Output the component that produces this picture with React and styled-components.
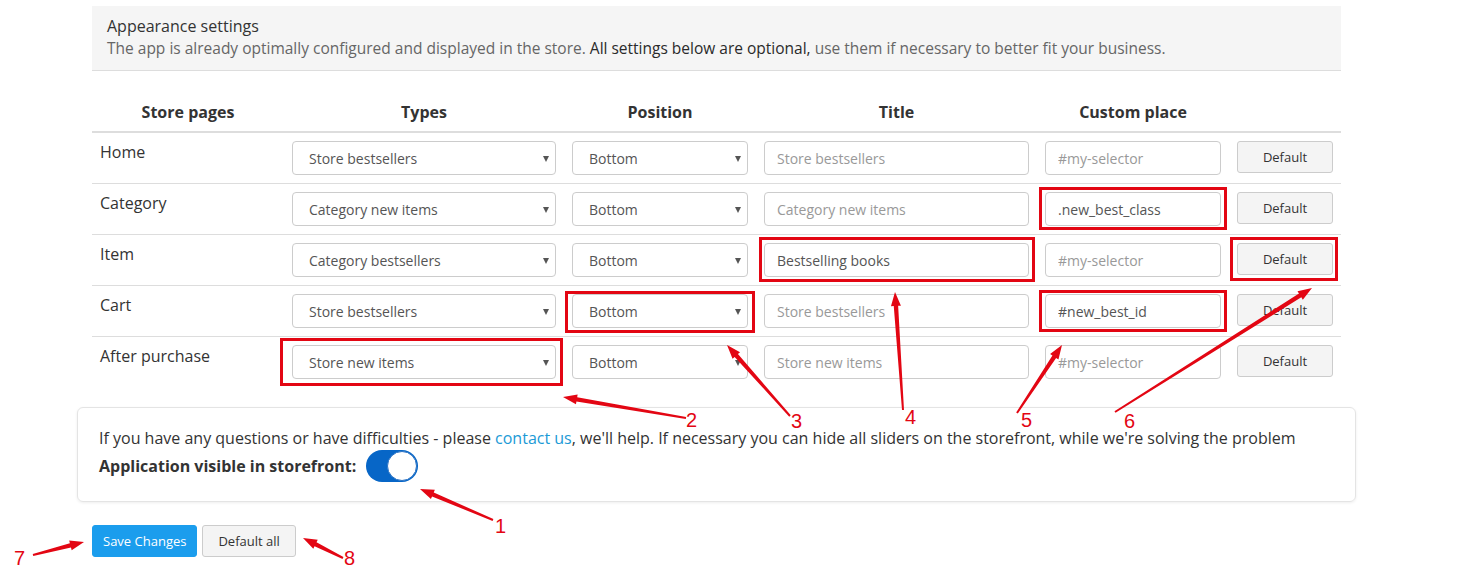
import styled, { createGlobalStyle } from 'styled-components';

const GlobalStyle = createGlobalStyle`
  * { box-sizing: border-box; }
  body {
    margin: 0;
    background: #fff;
    font-family: "Open Sans", "Noto Sans", Arial, sans-serif;
    color: #333;
  }
`;

const TYPES = ['Store bestsellers', 'Store new items', 'Category bestsellers', 'Category new items'];
const POSITIONS = ['Bottom', 'Top'];

const ROWS = [
  { page: 'Home', type: 'Store bestsellers', title: '', titlePh: 'Store bestsellers', place: '' },
  { page: 'Category', type: 'Category new items', title: '', titlePh: 'Category new items', place: '.new_best_class' },
  { page: 'Item', type: 'Category bestsellers', title: 'Bestselling books', titlePh: 'Category bestsellers', place: '' },
  { page: 'Cart', type: 'Store bestsellers', title: '', titlePh: 'Store bestsellers', place: '#new_best_id' },
  { page: 'After purchase', type: 'Store new items', title: '', titlePh: 'Store new items', place: '' },
];

// red marks drawn on top of the screenshot: [x1, y1, x2, y2]
const BOXES = [
  [1039, 187, 1227, 230],
  [759, 237, 1035, 282],
  [1230, 237, 1338, 281],
  [565, 291, 755, 333],
  [1039, 290, 1227, 332],
  [280, 338, 563, 386],
];

// [tailX, tailY, tipX, tipY, label, labelX, labelY]
const ARROWS = [
  [493, 520, 420, 489, '1', 495, 533],
  [686, 418, 563, 397, '2', 686, 427],
  [790, 416, 727, 345, '3', 791, 428],
  [903, 410, 895, 292, '4', 905, 424],
  [1017, 413, 1062, 345, '5', 1021, 427],
  [1115, 412, 1312, 288, '6', 1124, 428],
  [33, 555, 84, 542, '7', 14, 565],
  [343, 558, 303, 538, '8', 344, 565],
];

const arrowPoints = (x1, y1, x2, y2) => {
  const len = Math.hypot(x2 - x1, y2 - y1);
  const dx = (x2 - x1) / len;
  const dy = (y2 - y1) / len;
  const nx = -dy;
  const ny = dx;
  const nkX = x2 - dx * 14;
  const nkY = y2 - dy * 14;
  const p = (x, y, w) => `${x + nx * w},${y + ny * w}`;
  return [
    p(x1, y1, 1),
    p(nkX, nkY, 2.2),
    p(nkX, nkY, 5),
    `${x2},${y2}`,
    p(nkX, nkY, -5),
    p(nkX, nkY, -2.2),
    p(x1, y1, -1),
  ].join(' ');
};

const Annotations = () => (
  <Marks width="1462" height="570" viewBox="0 0 1462 570">
    {BOXES.map(([x1, y1, x2, y2], i) => (
      <rect
        key={'b' + i}
        x={x1 + 1.5}
        y={y1 + 1.5}
        width={x2 - x1 - 3}
        height={y2 - y1 - 3}
        fill="none"
        stroke="#e30613"
        strokeWidth="3"
      />
    ))}
    {ARROWS.map(([x1, y1, x2, y2, label, lx, ly], i) => (
      <g key={'a' + i}>
        <polygon points={arrowPoints(x1, y1, x2, y2)} fill="#e30613" />
        <text x={lx} y={ly} fill="#e30613" fontSize="20" fontFamily="Liberation Sans, Arial, sans-serif">
          {label}
        </text>
      </g>
    ))}
  </Marks>
);

const App = () => {
  return (
    <Page>
      <GlobalStyle />
      <Content>
        <Intro>
          <IntroTitle>Appearance settings</IntroTitle>
          <IntroText>
            The app is already optimally configured and displayed in the store.{' '}
            <Strong>All settings below are optional,</Strong> use them if necessary to better fit your business.
          </IntroText>
        </Intro>

        <Table>
          <colgroup>
            <col style={{ width: 192 }} />
            <col style={{ width: 280 }} />
            <col style={{ width: 192 }} />
            <col style={{ width: 281 }} />
            <col style={{ width: 192 }} />
            <col style={{ width: 112 }} />
          </colgroup>
          <thead>
            <tr>
              <Th>Store pages</Th>
              <Th>Types</Th>
              <Th>Position</Th>
              <Th>Title</Th>
              <Th>Custom place</Th>
              <Th></Th>
            </tr>
          </thead>
          <tbody>
            {ROWS.map((row) => (
              <tr key={row.page}>
                <Td><PageName>{row.page}</PageName></Td>
                <Td>
                  <SelectWrap>
                    <Select defaultValue={row.type}>
                      {TYPES.map((t) => <option key={t}>{t}</option>)}
                    </Select>
                    <Caret />
                  </SelectWrap>
                </Td>
                <Td>
                  <SelectWrap>
                    <Select defaultValue="Bottom">
                      {POSITIONS.map((p) => <option key={p}>{p}</option>)}
                    </Select>
                    <Caret />
                  </SelectWrap>
                </Td>
                <Td>
                  <Input defaultValue={row.title} placeholder={row.titlePh} />
                </Td>
                <Td>
                  <Input defaultValue={row.place} placeholder="#my-selector" />
                </Td>
                <Td>
                  <DefaultButton>Default</DefaultButton>
                </Td>
              </tr>
            ))}
          </tbody>
        </Table>

        <Notice>
          <NoticeLine>
            If you have any questions or have difficulties - please <Link href="#">contact us</Link>, we'll help.
            If necessary you can hide all sliders on the storefront, while we're solving the problem
          </NoticeLine>
          <VisibleRow>
            <VisibleLabel>Application visible in storefront:</VisibleLabel>
            <Toggle $on>
              <Knob />
            </Toggle>
          </VisibleRow>
        </Notice>

        <Actions>
          <Button $primary>Save Changes</Button>
          <Button>Default all</Button>
        </Actions>
      </Content>
      <Annotations />
    </Page>
  );
};

const Page = styled.div`
  position: relative;
  width: 1462px;
  height: 570px;
  overflow: hidden;
`;
const Content = styled.div`
  width: 1249px;
  margin-left: 92px;
  padding-top: 6px;
`;
const Intro = styled.div`
  background: #f5f5f5;
  border-bottom: 1px solid #ddd;
  padding: 9px 15px 11px;
`;
const IntroTitle = styled.div`
  font-size: 16px;
  line-height: 23px;
  color: #333;
`;
const IntroText = styled.div`
  font-size: 15.5px;
  line-height: 21px;
  color: #666;
`;
const Strong = styled.span`
  color: #2a2a2a;
  font-weight: 500;
`;
const Table = styled.table`
  width: 100%;
  margin-top: 22px;
  border-collapse: collapse;
  table-layout: fixed;
  tbody tr + tr td {
    border-top: 1px solid #ddd;
  }
`;
const Th = styled.th`
  padding: 8px;
  font-size: 16px;
  line-height: 22px;
  font-weight: 700;
  color: #333;
  text-align: center;
  border-bottom: 2px solid #ddd;
`;
const Td = styled.td`
  padding: 8px;
  vertical-align: top;
`;
const PageName = styled.div`
  font-size: 16px;
  line-height: 22px;
  color: #333;
`;
const SelectWrap = styled.div`
  position: relative;
`;
const Select = styled.select`
  display: block;
  width: 100%;
  height: 34px;
  appearance: none;
  -webkit-appearance: none;
  border: 1px solid #ccc;
  border-radius: 4px;
  background: #fff;
  padding: 0 24px 0 16px;
  font-family: inherit;
  font-size: 14px;
  color: #555;
  outline: none;
`;
const Caret = styled.span`
  position: absolute;
  right: 7px;
  top: 15px;
  width: 0;
  height: 0;
  border-left: 3.5px solid transparent;
  border-right: 3.5px solid transparent;
  border-top: 6px solid #555;
  pointer-events: none;
`;
const Input = styled.input`
  display: block;
  width: 100%;
  height: 34px;
  border: 1px solid #ccc;
  border-radius: 4px;
  padding: 0 12px;
  font-family: inherit;
  font-size: 14px;
  color: #555;
  outline: none;
  &::placeholder {
    color: #999;
  }
`;
const DefaultButton = styled.button`
  display: block;
  width: 100%;
  height: 32px;
  border: 1px solid #ccc;
  border-radius: 3px;
  background: #f4f4f4;
  font-family: inherit;
  font-size: 13px;
  color: #333;
`;
const Notice = styled.div`
  margin: 20px -15px 0;
  padding: 18px 21px 19px;
  border: 1px solid #e4e4e4;
  border-radius: 6px;
  box-shadow: 0 1px 3px rgba(0, 0, 0, 0.07);
`;
const NoticeLine = styled.div`
  font-size: 16px;
  line-height: 24px;
  color: #333;
`;
const Link = styled.a`
  color: #1b9ad6;
  text-decoration: none;
`;
const VisibleRow = styled.div`
  display: flex;
  align-items: center;
  gap: 10px;
  height: 32px;
`;
const VisibleLabel = styled.span`
  font-size: 16px;
  font-weight: 700;
  color: #333;
`;
const Toggle = styled.span`
  position: relative;
  display: inline-flex;
  align-items: center;
  justify-content: ${(p) => (p.$on ? 'flex-end' : 'flex-start')};
  width: 52px;
  height: 32px;
  border-radius: 16px;
  background: ${(p) => (p.$on ? '#0766c7' : '#ccc')};
  padding: 1px;
`;
const Knob = styled.span`
  width: 30px;
  height: 30px;
  border-radius: 50%;
  background: #fff;
  border: 1px solid #2a72c4;
`;
const Actions = styled.div`
  display: flex;
  gap: 5px;
  margin-top: 23px;
`;
const Button = styled.button`
  height: 32px;
  padding: 0 ${(p) => (p.$primary ? '10px' : '15px')};
  border: 1px solid ${(p) => (p.$primary ? '#1b9ded' : '#ccc')};
  border-radius: 3px;
  background: ${(p) => (p.$primary ? '#1b9ded' : '#f4f4f4')};
  color: ${(p) => (p.$primary ? '#fff' : '#333')};
  font-family: inherit;
  font-size: 13px;
`;
const Marks = styled.svg`
  position: absolute;
  left: 0;
  top: 0;
  pointer-events: none;
`;

export default App;
